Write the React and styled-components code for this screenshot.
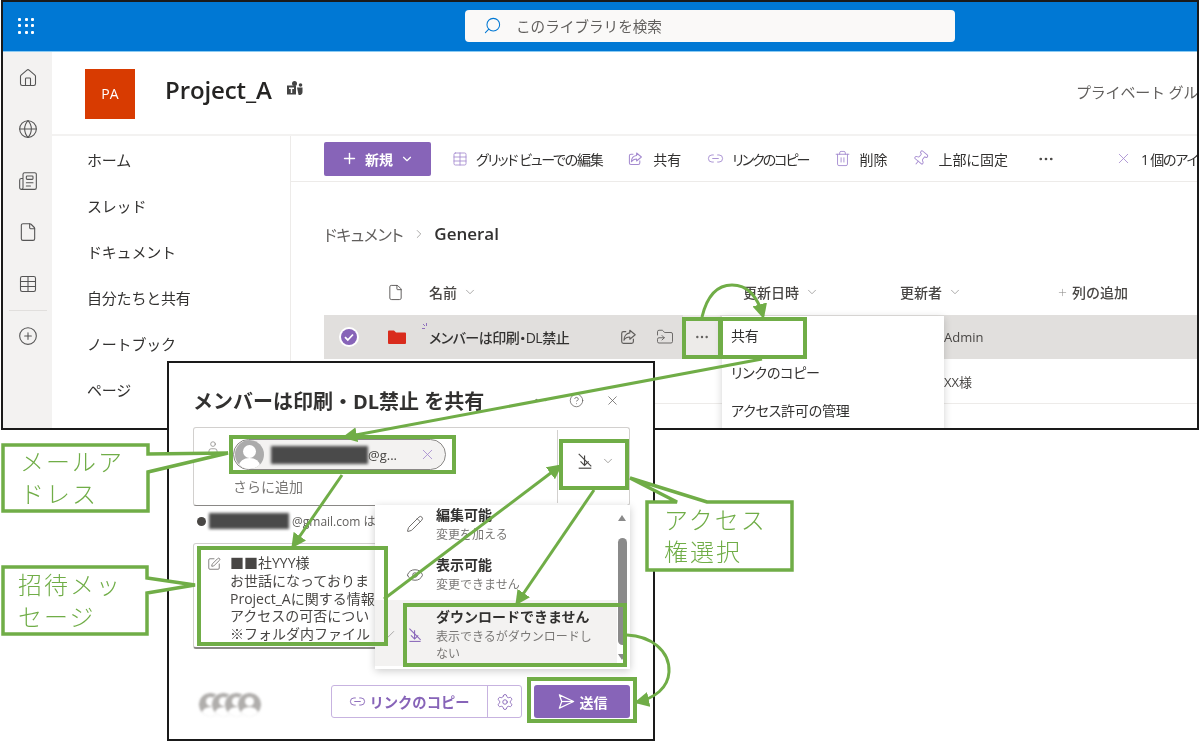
import styled, { createGlobalStyle } from "styled-components";
import {
  Check,
  ChevronDown,
  ChevronRight,
  CirclePlus,
  CircleHelp,
  Ellipsis,
  Eye,
  File,
  FolderSymlink,
  Globe,
  House,
  Link2,
  Newspaper,
  Pencil,
  Pin,
  Plus,
  Search,
  Settings,
  SquarePen,
  Table,
  Trash2,
  User,
  X,
} from "lucide-react";

const GlobalStyle = createGlobalStyle`
  html, body { margin: 0; padding: 0; background: #fff; }
  body { font-family: "Open Sans", "Noto Sans CJK JP", sans-serif; color: #323130; }
  * { box-sizing: border-box; }
`;

const purple = "#8764b8";
const green = "#70ad47";

const Canvas = styled.div`
  position: relative;
  width: 1200px;
  height: 742px;
  overflow: hidden;
  background: #fff;
  filter: blur(0.35px);
`;

const Window = styled.div`
  position: relative;
  width: 1198px;
  height: 430px;
  margin-left: 1px;
  border: 2px solid #1a1a1a;
  overflow: hidden;
  display: flex;
  flex-direction: column;
  background: #fff;
`;

const TopBar = styled.div`
  flex: none;
  height: 50px;
  background: #0078d4;
  border-bottom: 1px solid #8ccbf2;
  display: flex;
  align-items: center;
  padding-left: 15px;
`;

const Waffle = styled.div`
  width: 16px;
  height: 16px;
  display: grid;
  grid-template-columns: repeat(3, 3px);
  grid-auto-rows: 3px;
  gap: 3.5px;
  margin-top: -2px;
  i { background: #fff; border-radius: 1px; }
`;

const SearchBox = styled.div`
  width: 490px;
  height: 32px;
  margin-left: 431px;
  margin-top: -2px;
  background: #faf9f8;
  border-radius: 4px;
  display: flex;
  align-items: center;
  gap: 14px;
  padding-left: 18px;
  font-size: 14.6px;
  color: #605e5c;
  svg { color: #0078d4; transform: scaleX(-1); }
`;

const Body = styled.div`
  flex: 1;
  display: flex;
  min-height: 0;
`;

const Rail = styled.div`
  flex: none;
  width: 49px;
  background: #f3f2f1;
  display: flex;
  flex-direction: column;
  align-items: center;
`;

const RailButton = styled.div`
  height: 51.5px;
  flex: none;
  display: flex;
  align-items: center;
  justify-content: center;
  color: #555;
`;

const RailDivider = styled.div`
  width: 38px;
  height: 1px;
  background: #e1dfdd;
`;

const Main = styled.div`
  flex: 1;
  min-width: 0;
  display: flex;
  flex-direction: column;
`;

const SiteHeader = styled.div`
  flex: none;
  height: 84px;
  border-bottom: 2px solid #f3f2f1;
  display: flex;
  align-items: center;
  padding-left: 33px;
`;

const SiteIdentity = styled.div`
  flex: none;
  width: 991px;
  display: flex;
  align-items: center;
`;

const SiteLogo = styled.div`
  width: 50px;
  height: 50px;
  background: #d83b01;
  color: #fff;
  font-size: 14px;
  display: flex;
  align-items: center;
  justify-content: center;
  margin-top: 1px;
`;

const SiteTitle = styled.div`
  margin-left: 30px;
  margin-top: -8px;
  font-size: 24px;
  font-weight: 600;
  letter-spacing: -0.1px;
  color: #252423;
`;

const TeamsMark = styled.svg`
  margin-left: 14px;
  margin-top: -8px;
  color: #444;
`;

const PrivateLabel = styled.div`
  flex: none;
  white-space: nowrap;
  font-size: 15px;
  letter-spacing: -0.2px;
  color: #605e5c;
  margin-top: -4px;
`;

const Content = styled.div`
  flex: 1;
  display: flex;
  min-height: 0;
`;

const Nav = styled.nav`
  flex: none;
  width: 239px;
  border-right: 1px solid #edebe9;
  padding: 0 0 0 35px;
`;

const NavItem = styled.div`
  height: 46px;
  display: flex;
  align-items: center;
  font-size: 15px;
  color: #323130;
  letter-spacing: -0.2px;
`;

const Library = styled.div`
  flex: 1;
  min-width: 0;
  display: flex;
  flex-direction: column;
`;

const CommandBar = styled.div`
  flex: none;
  height: 46px;
  border-bottom: 1px solid #edebe9;
  display: flex;
  align-items: center;
  padding-left: 33px;
  white-space: nowrap;
  font-feature-settings: "palt";
`;

const NewButton = styled.div`
  flex: none;
  width: 107px;
  height: 34px;
  background: ${purple};
  border-radius: 2px;
  color: #fff;
  font-size: 14px;
  font-weight: 700;
  display: flex;
  align-items: center;
  justify-content: center;
  gap: 7px;
  margin-right: 21px;
`;

const Command = styled.div`
  flex: none;
  display: flex;
  align-items: center;
  gap: ${(p) => p.$gap || 8}px;
  margin-right: ${(p) => p.$after || 0}px;
  font-size: 14px;
  letter-spacing: ${(p) => p.$track || 0}px;
  color: #323130;
  svg { color: #a58bd0; flex: none; }
`;

const MoreCommand = styled(Command)`
  svg { color: #484644; }
`;

const TiltedPin = styled(Pin)`
  transform: rotate(40deg);
`;

const Breadcrumb = styled.div`
  flex: none;
  height: 87px;
  padding: 16px 0 0 33px;
  display: flex;
  align-items: center;
  font-feature-settings: "palt";
`;

const CrumbLink = styled.span`
  font-size: 16px;
  color: #605e5c;
  letter-spacing: -0.4px;
`;

const CrumbSeparator = styled.span`
  display: flex;
  margin: 0 8px 0 9px;
  color: #8a8886;
`;

const CrumbCurrent = styled.span`
  font-size: 17px;
  font-weight: 600;
  color: #323130;
`;

const listGrid = "63px 42px 314px 157px 160px 1fr";

const ColumnHeader = styled.div`
  flex: none;
  height: 46px;
  margin-left: 33px;
  display: grid;
  grid-template-columns: ${listGrid};
  align-items: center;
  font-size: 14px;
  font-weight: 500;
  color: #484644;
`;

const HeaderCell = styled.div`
  grid-column: ${(p) => p.$col};
  margin-left: ${(p) => p.$shift || 0}px;
  display: flex;
  align-items: center;
  gap: ${(p) => p.$gap || 6}px;
  white-space: nowrap;
  svg { color: #8a8886; flex: none; }
`;

const FileHeaderCell = styled(HeaderCell)`
  svg { color: #484644; }
`;

const Row = styled.div`
  flex: none;
  height: ${(p) => (p.$selected ? 44 : 45)}px;
  margin-left: 33px;
  display: grid;
  grid-template-columns: ${listGrid};
  align-items: center;
  font-size: 13px;
  color: #484644;
  background: ${(p) => (p.$selected ? "#e1dfdd" : "#fff")};
  border-bottom: ${(p) => (p.$selected ? "none" : "1px solid #edebe9")};
`;

const CheckCell = styled.div`
  padding-left: 15px;
  display: flex;
`;

const NameCell = styled.div`
  position: relative;
  height: 100%;
  padding-right: 23px;
  display: flex;
  align-items: center;
  justify-content: space-between;
  font-size: 14px;
  font-weight: 500;
  letter-spacing: -0.5px;
  color: #323130;
  font-feature-settings: "palt";
  white-space: nowrap;
`;

const NewSparkle = styled.svg`
  position: absolute;
  left: -8px;
  top: 7px;
  color: ${purple};
`;

const RowActions = styled.div`
  display: flex;
  align-items: center;
  height: 100%;
  color: #605e5c;
`;

const RowAction = styled.div`
  width: 37px;
  height: 100%;
  display: flex;
  align-items: center;
  justify-content: center;
  background: ${(p) => (p.$active ? "#edebe9" : "transparent")};
`;

const EditorCell = styled.div`
  grid-column: 5;
  padding-left: 44px;
  white-space: nowrap;
`;

const ContextMenu = styled.div`
  position: absolute;
  left: 719px;
  top: 314px;
  width: 222px;
  height: 120px;
  background: #fff;
  box-shadow: 0 2px 8px rgba(0, 0, 0, 0.18);
  font-feature-settings: "palt";
`;

const ContextItem = styled.div`
  height: 37.5px;
  padding-left: 9px;
  display: flex;
  align-items: center;
  font-size: 14px;
  letter-spacing: -0.2px;
  color: #323130;
`;

const Dialog = styled.div`
  position: absolute;
  left: 167px;
  top: 361px;
  width: 488px;
  height: 380px;
  border: 2px solid #1a1a1a;
  background: #fff;
  padding: 25px 23px 0 24px;
  display: flex;
  flex-direction: column;
`;

const DialogHead = styled.div`
  flex: none;
  height: 24px;
  margin-bottom: 15px;
  display: flex;
  align-items: center;
  padding-right: 10px;
  color: #605e5c;
`;

const DialogTitle = styled.h2`
  margin: 0;
  flex: 1;
  font-size: 20px;
  font-weight: 700;
  color: #323130;
  white-space: nowrap;
`;

const HeadTool = styled.span`
  display: flex;
  margin-left: ${(p) => p.$gap}px;
`;

const RecipientBox = styled.div`
  flex: none;
  height: 79px;
  border: 1px solid #d2d0ce;
  border-bottom-color: #8a8886;
  border-radius: 3px;
  display: flex;
`;

const RecipientField = styled.div`
  flex: 1;
  padding: 11px 0 0 12px;
  display: flex;
  flex-direction: column;
  gap: 6px;
`;

const RecipientTop = styled.div`
  display: flex;
  align-items: center;
  gap: 13px;
  color: #8a8886;
  > svg { flex: none; margin-top: -16px; }
`;

const Chip = styled.div`
  width: 213px;
  height: 31px;
  border: 1px solid #8a8886;
  border-radius: 16px;
  background: #f3f2f1;
  display: flex;
  align-items: center;
  padding: 0 9px 0 1px;
  font-size: 13px;
  color: #484644;
  white-space: nowrap;
`;

const ChipAvatar = styled.span`
  position: relative;
  flex: none;
  width: 29px;
  height: 29px;
  margin-right: 7px;
  border-radius: 50%;
  background: #ababab;
  overflow: hidden;
  &::before {
    content: "";
    position: absolute;
    left: 8px;
    top: 5px;
    width: 13px;
    height: 13px;
    border-radius: 50%;
    background: #fff;
  }
  &::after {
    content: "";
    position: absolute;
    left: 4px;
    top: 18px;
    width: 21px;
    height: 16px;
    border-radius: 50%;
    background: #fff;
  }
`;

const ChipClose = styled.span`
  display: flex;
  margin-left: auto;
  color: #a58bd0;
`;

const Redacted = styled.span`
  flex: none;
  display: block;
  width: ${(p) => p.$w}px;
  height: ${(p) => p.$h}px;
  background: #4a4a4a;
  filter: blur(1.5px);
`;

const AddMore = styled.div`
  padding-left: 27px;
  font-size: 14px;
  color: #797775;
`;

const PermissionButton = styled.div`
  flex: none;
  width: 72px;
  margin: 2px 0;
  border-left: 1px solid #d2d0ce;
  padding: 0 0 12px 18px;
  display: flex;
  align-items: center;
  gap: 7px;
  color: #484644;
  svg:last-child { color: #8a8886; }
`;

const InfoLine = styled.div`
  flex: none;
  height: 37px;
  padding: 0 0 7px 4px;
  display: flex;
  align-items: center;
  gap: 3px;
  font-size: 12px;
  color: #605e5c;
  white-space: nowrap;
`;

const InfoDot = styled.span`
  width: 9px;
  height: 9px;
  border-radius: 50%;
  background: #484644;
  flex: none;
`;

const MessageBox = styled.div`
  flex: none;
  height: 106px;
  border: 1px solid #d2d0ce;
  border-bottom: 2px solid #8a8886;
  border-radius: 3px;
  padding: 10px 0 0 13px;
  display: flex;
  gap: 9px;
  overflow: hidden;
  svg { flex: none; color: #605e5c; margin-top: 3px; }
`;

const MessageText = styled.div`
  width: 145px;
  overflow: hidden;
  font-size: 14px;
  line-height: 17.8px;
  color: #484644;
  white-space: pre;
`;

const Footer = styled.div`
  flex: none;
  height: 33px;
  margin-top: 36px;
  display: flex;
  align-items: center;
  padding-left: 5px;
`;

const Avatars = styled.div`
  display: flex;
  margin: 5px auto 0 0;
  filter: blur(1px);
`;

const AvatarFace = styled.span`
  position: relative;
  width: 25px;
  height: 25px;
  border-radius: 50%;
  background: #b0aeac;
  border: 1px solid #fff;
  overflow: hidden;
  margin-left: ${(p) => (p.$first ? 0 : -12)}px;
  &::before {
    content: "";
    position: absolute;
    left: 7px;
    top: 4px;
    width: 9px;
    height: 9px;
    border-radius: 50%;
    background: #fff;
  }
  &::after {
    content: "";
    position: absolute;
    left: 3px;
    top: 14px;
    width: 17px;
    height: 12px;
    border-radius: 50%;
    background: #fff;
  }
`;

const LinkButton = styled.div`
  width: 191px;
  height: 33px;
  border: 1px solid #c7b3e0;
  border-radius: 3px;
  display: flex;
  align-items: stretch;
  color: ${purple};
`;

const LinkLabel = styled.div`
  flex: 1;
  display: flex;
  align-items: center;
  justify-content: center;
  gap: 3px;
  font-size: 14.3px;
  font-weight: 700;
  border-right: 1px solid #c7b3e0;
`;

const LinkSettings = styled.div`
  flex: none;
  width: 33px;
  display: flex;
  align-items: center;
  justify-content: center;
`;

const SendButton = styled.div`
  width: 96px;
  height: 33px;
  margin-left: 12px;
  background: ${purple};
  border-radius: 3px;
  color: #fff;
  font-size: 14px;
  font-weight: 700;
  display: flex;
  align-items: center;
  justify-content: center;
  gap: 4px;
`;

const PermissionMenu = styled.div`
  position: absolute;
  left: 206px;
  top: 142px;
  width: 255px;
  height: 164px;
  background: #fff;
  box-shadow: 0 2px 8px rgba(0, 0, 0, 0.2);
  display: flex;
  overflow: hidden;
`;

const PermissionList = styled.div`
  flex: 1;
  min-width: 0;
  display: flex;
  flex-direction: column;
`;

const PermissionItem = styled.div`
  flex: none;
  height: ${(p) => p.$h}px;
  padding: ${(p) => p.$top || 0}px 0 ${(p) => p.$bottom || 0}px;
  background: ${(p) => (p.$selected ? "#f3f2f1" : "transparent")};
  display: grid;
  grid-template-columns: 27px 26px 1fr;
  align-items: center;
`;

const ItemCheck = styled.div`
  display: flex;
  justify-content: center;
  color: #8a8886;
`;

const ItemIcon = styled.div`
  display: flex;
  justify-content: center;
  color: ${(p) => (p.$selected ? purple : "#605e5c")};
`;

const ItemText = styled.div`
  padding-left: 8px;
  width: 168px;
`;

const ItemTitle = styled.div`
  font-size: 14px;
  line-height: 19px;
  font-weight: 700;
  color: #323130;
  white-space: nowrap;
`;

const ItemNote = styled.div`
  margin-top: 3px;
  font-size: 12px;
  line-height: 16.5px;
  color: #797775;
`;

const ScrollTrack = styled.div`
  flex: none;
  width: 13px;
  padding: 10px 3px 0 0;
  display: flex;
  flex-direction: column;
  align-items: center;
`;

const ScrollArrow = styled.span`
  width: 0;
  height: 0;
  border-left: 4px solid transparent;
  border-right: 4px solid transparent;
  ${(p) =>
    p.$down
      ? "border-top: 6px solid #8a8a8a; margin-top: 9px;"
      : "border-bottom: 6px solid #8a8a8a;"}
`;

const ScrollThumb = styled.span`
  width: 9px;
  height: 107px;
  margin-top: 17px;
  border-radius: 5px;
  background: #8a8a8a;
`;

const Annotations = styled.svg`
  position: absolute;
  left: 0;
  top: 0;
  width: 1200px;
  height: 742px;
`;

const Mark = styled.div`
  position: absolute;
  left: ${(p) => p.$x}px;
  top: ${(p) => p.$y}px;
  width: ${(p) => p.$w}px;
  height: ${(p) => p.$h}px;
  border: 4px solid ${green};
`;

const CalloutText = styled.div`
  position: absolute;
  left: ${(p) => p.$x}px;
  top: ${(p) => p.$y}px;
  width: ${(p) => p.$w}px;
  font-family: "Noto Sans CJK JP", sans-serif;
  font-size: 24px;
  font-weight: 300;
  line-height: 32px;
  letter-spacing: 2px;
  color: ${green};
`;

const ShareIcon = ({ size = 16 }) => (
  <svg width={size} height={size} viewBox="0 0 20 20" fill="none" stroke="currentColor" strokeWidth="1.3" strokeLinejoin="round">
    <path d="M8 4H5a2 2 0 0 0-2 2v9a2 2 0 0 0 2 2h9a2 2 0 0 0 2-2v-3" />
    <path d="M12 2.5l6 5-6 5V10c-3 0-5 1-6.5 3.5C5.5 9.5 8 6 12 5.5z" />
  </svg>
);

const NoDownloadIcon = ({ size = 18 }) => (
  <svg width={size} height={size} viewBox="0 0 20 20" fill="none" stroke="currentColor" strokeWidth="1.3">
    <path d="M3 18h14" />
    <path d="M9.5 4v11M5 10.5l4.5 4.5 4.5-4.5" />
    <path d="M3 2l14 14" />
  </svg>
);

const SendIcon = () => (
  <svg width="19" height="19" viewBox="0 0 20 20" fill="none" stroke="currentColor" strokeWidth="1.3" strokeLinejoin="round">
    <path d="M2.5 3l15 7-15 7 2.5-7z" />
    <path d="M5 10h12" />
  </svg>
);

const SelectedCheck = () => (
  <svg width="20" height="20" viewBox="0 0 20 20">
    <circle cx="10" cy="10" r="10" fill="#fff" />
    <circle cx="10" cy="10" r="8" fill={purple} />
    <path d="M6 10.2l2.8 2.8L14 7.5" fill="none" stroke="#fff" strokeWidth="1.8" />
  </svg>
);

const permissionItems = [
  { title: "編集可能", note: "変更を加える", icon: <Pencil size={18} strokeWidth={1.2} />, h: 47, bottom: 18 },
  { title: "表示可能", note: "変更できません", icon: <Eye size={18} strokeWidth={1.2} />, h: 48, bottom: 3 },
];

const commands = [
  { label: "グリッド ビューでの編集", icon: <Table size={16} strokeWidth={1.3} />, after: 25, track: -1.3 },
  { label: "共有", icon: <ShareIcon />, gap: 10, after: 26 },
  { label: "リンクのコピー", icon: <Link2 size={17} strokeWidth={1.3} />, after: 26, track: -2 },
  { label: "削除", icon: <Trash2 size={17} strokeWidth={1.3} />, after: 25 },
  { label: "上部に固定", icon: <TiltedPin size={17} strokeWidth={1.3} />, gap: 9, after: 29 },
];

export default function App() {
  return (
    <>
      <GlobalStyle />
      <Canvas>
        <Window>
          <TopBar>
            <Waffle>
              {Array.from({ length: 9 }, (_, i) => (
                <i key={i} />
              ))}
            </Waffle>
            <SearchBox>
              <Search size={19} strokeWidth={1.3} />
              このライブラリを検索
            </SearchBox>
          </TopBar>
          <Body>
            <Rail>
              <RailButton><House size={20} strokeWidth={1.3} /></RailButton>
              <RailButton><Globe size={20} strokeWidth={1.3} /></RailButton>
              <RailButton><Newspaper size={20} strokeWidth={1.3} /></RailButton>
              <RailButton><File size={20} strokeWidth={1.3} /></RailButton>
              <RailButton><Table size={20} strokeWidth={1.3} /></RailButton>
              <RailDivider />
              <RailButton><CirclePlus size={20} strokeWidth={1.3} /></RailButton>
            </Rail>
            <Main>
              <SiteHeader>
                <SiteIdentity>
                  <SiteLogo>PA</SiteLogo>
                  <SiteTitle>Project_A</SiteTitle>
                  <TeamsMark width="18" height="18" viewBox="0 0 18 18" fill="currentColor">
                    <circle cx="8.5" cy="3.5" r="2.5" />
                    <circle cx="14.5" cy="5" r="1.8" />
                    <path d="M1 5.5h9v9H1z" />
                    <path d="M11 7.5h5.5V12a3 3 0 0 1-4 2.8z" />
                    <path d="M3 7.5h5v1.4H6.2V13H4.8V8.9H3z" fill="#fff" />
                  </TeamsMark>
                </SiteIdentity>
                <PrivateLabel>プライベート グル</PrivateLabel>
              </SiteHeader>
              <Content>
                <Nav>
                  <NavItem>ホーム</NavItem>
                  <NavItem>スレッド</NavItem>
                  <NavItem>ドキュメント</NavItem>
                  <NavItem>自分たちと共有</NavItem>
                  <NavItem>ノートブック</NavItem>
                  <NavItem>ページ</NavItem>
                </Nav>
                <Library>
                  <CommandBar>
                    <NewButton>
                      <Plus size={17} strokeWidth={2} />
                      新規
                      <ChevronDown size={14} strokeWidth={2} />
                    </NewButton>
                    {commands.map((c) => (
                      <Command key={c.label} $gap={c.gap} $after={c.after} $track={c.track}>
                        {c.icon}
                        {c.label}
                      </Command>
                    ))}
                    <MoreCommand $after={60}>
                      <Ellipsis size={18} strokeWidth={1.6} />
                    </MoreCommand>
                    <Command $gap={9} $track={-1.2}>
                      <X size={17} strokeWidth={1.2} />
                      1 個のアイ
                    </Command>
                  </CommandBar>
                  <Breadcrumb>
                    <CrumbLink>ドキュメント</CrumbLink>
                    <CrumbSeparator><ChevronRight size={14} strokeWidth={1.2} /></CrumbSeparator>
                    <CrumbCurrent>General</CrumbCurrent>
                  </Breadcrumb>
                  <ColumnHeader>
                    <FileHeaderCell $col={2}><File size={17} strokeWidth={1.2} /></FileHeaderCell>
                    <HeaderCell $col={3}>名前<ChevronDown size={14} strokeWidth={1.2} /></HeaderCell>
                    <HeaderCell $col={4}>更新日時<ChevronDown size={14} strokeWidth={1.2} /></HeaderCell>
                    <HeaderCell $col={5}>更新者<ChevronDown size={14} strokeWidth={1.2} /></HeaderCell>
                    <HeaderCell $col={6} $gap={4} $shift={-3}><Plus size={11} strokeWidth={1.2} />列の追加</HeaderCell>
                  </ColumnHeader>
                  <Row $selected>
                    <CheckCell><SelectedCheck /></CheckCell>
                    <svg width="20" height="16" viewBox="0 0 20 16">
                      <path d="M1 2.5a1 1 0 0 1 1-1h5l2 2h9a1 1 0 0 1 1 1V14a1 1 0 0 1-1 1H2a1 1 0 0 1-1-1z" fill="#d92b1c" />
                    </svg>
                    <NameCell>
                      <NewSparkle width="9" height="9" viewBox="0 0 9 9" stroke="currentColor" strokeWidth="0.9">
                        <path d="M1 6.5h3M5.5 1v3M2 2l2 2" />
                      </NewSparkle>
                      メンバーは印刷・DL禁止
                      <RowActions>
                        <RowAction><ShareIcon size={18} /></RowAction>
                        <RowAction><FolderSymlink size={18} strokeWidth={1.2} /></RowAction>
                        <RowAction $active><Ellipsis size={16} strokeWidth={1.6} /></RowAction>
                      </RowActions>
                    </NameCell>
                    <EditorCell>Admin</EditorCell>
                  </Row>
                  <Row>
                    <EditorCell>XX様</EditorCell>
                  </Row>
                </Library>
              </Content>
            </Main>
          </Body>
          <ContextMenu>
            <ContextItem>共有</ContextItem>
            <ContextItem>リンクのコピー</ContextItem>
            <ContextItem>アクセス許可の管理</ContextItem>
          </ContextMenu>
        </Window>

        <Dialog>
          <DialogHead>
            <DialogTitle>メンバーは印刷・DL禁止 を共有</DialogTitle>
            <HeadTool><Ellipsis size={16} strokeWidth={1.3} /></HeadTool>
            <HeadTool $gap={20}><CircleHelp size={15} strokeWidth={1.2} /></HeadTool>
            <HeadTool $gap={21}><X size={15} strokeWidth={1.2} /></HeadTool>
          </DialogHead>
          <RecipientBox>
            <RecipientField>
              <RecipientTop>
                <User size={14} strokeWidth={1.3} />
                <Chip>
                  <ChipAvatar />
                  <Redacted $w={97} $h={18} />
                  <span>@g...</span>
                  <ChipClose><X size={17} strokeWidth={1.2} /></ChipClose>
                </Chip>
              </RecipientTop>
              <AddMore>さらに追加</AddMore>
            </RecipientField>
            <PermissionButton>
              <NoDownloadIcon size={18} />
              <ChevronDown size={14} strokeWidth={1.3} />
            </PermissionButton>
          </RecipientBox>
          <InfoLine>
            <InfoDot />
            <Redacted $w={80} $h={16} />
            @gmail.com は
          </InfoLine>
          <MessageBox>
            <SquarePen size={14} strokeWidth={1.3} />
            <MessageText>{"■■社YYY様\nお世話になっておりま\nProject_Aに関する情報\nアクセスの可否につい\n※フォルダ内ファイル"}</MessageText>
          </MessageBox>
          <Footer>
            <Avatars>
              <AvatarFace $first />
              <AvatarFace />
              <AvatarFace />
              <AvatarFace />
            </Avatars>
            <LinkButton>
              <LinkLabel>
                <Link2 size={17} strokeWidth={1.3} />
                リンクのコピー
              </LinkLabel>
              <LinkSettings><Settings size={18} strokeWidth={1.2} /></LinkSettings>
            </LinkButton>
            <SendButton>
              <SendIcon />
              送信
            </SendButton>
          </Footer>
          <PermissionMenu>
            <PermissionList>
              {permissionItems.map((item) => (
                <PermissionItem key={item.title} $h={item.h} $bottom={item.bottom}>
                  <span />
                  <ItemIcon>{item.icon}</ItemIcon>
                  <ItemText>
                    <ItemTitle>{item.title}</ItemTitle>
                    <ItemNote>{item.note}</ItemNote>
                  </ItemText>
                </PermissionItem>
              ))}
              <PermissionItem $selected $h={66} $top={3}>
                <ItemCheck><Check size={14} strokeWidth={1.2} /></ItemCheck>
                <ItemIcon $selected><NoDownloadIcon size={16} /></ItemIcon>
                <ItemText>
                  <ItemTitle>ダウンロードできません</ItemTitle>
                  <ItemNote>表示できるがダウンロードしない</ItemNote>
                </ItemText>
              </PermissionItem>
            </PermissionList>
            <ScrollTrack>
              <ScrollArrow />
              <ScrollThumb />
              <ScrollArrow $down />
            </ScrollTrack>
          </PermissionMenu>
        </Dialog>

        <Annotations viewBox="0 0 1200 742" fill="none" stroke={green} strokeWidth="3">
          <defs>
            <marker id="head" markerWidth="5" markerHeight="5" refX="4" refY="2.5" orient="auto">
              <path d="M0 0L5 2.5L0 5z" fill={green} stroke="none" />
            </marker>
          </defs>
          <path d="M702 317C708 292 720 285 732 285C748 285 758 298 763 316" markerEnd="url(#head)" />
          <path d="M762 359L345 437" markerEnd="url(#head)" />
          <path d="M342 475L293 546" markerEnd="url(#head)" />
          <path d="M384 599L560 466" markerEnd="url(#head)" />
          <path d="M594 490L517 603" markerEnd="url(#head)" />
          <path d="M627 635C650 636 670 650 669 672C668 688 655 698 637 702" markerEnd="url(#head)" />
          <path d="M3 445H148V454L228 453L148 472V511H3z" fill="#fff" strokeWidth="3.5" />
          <path d="M3 567H147V578L195 585L147 593V634H3z" fill="#fff" strokeWidth="3.5" />
          <path d="M647 502H677L630 478L707 502H792V570H647z" fill="#fff" strokeWidth="3.5" />
        </Annotations>

        <Mark $x={682} $y={317} $w={40} $h={42} />
        <Mark $x={719} $y={317} $w={88} $h={42} />
        <Mark $x={229} $y={435} $w={227} $h={39} />
        <Mark $x={559} $y={439} $w={70} $h={51} />
        <Mark $x={197} $y={546} $w={191} $h={100} />
        <Mark $x={403} $y={603} $w={224} $h={64} />
        <Mark $x={527} $y={677} $w={110} $h={46} />

        <CalloutText $x={20} $y={445} $w={120}>メールアドレス</CalloutText>
        <CalloutText $x={18} $y={568} $w={120}>招待メッセージ</CalloutText>
        <CalloutText $x={664} $y={503} $w={120}>アクセス権選択</CalloutText>
      </Canvas>
    </>
  );
}
